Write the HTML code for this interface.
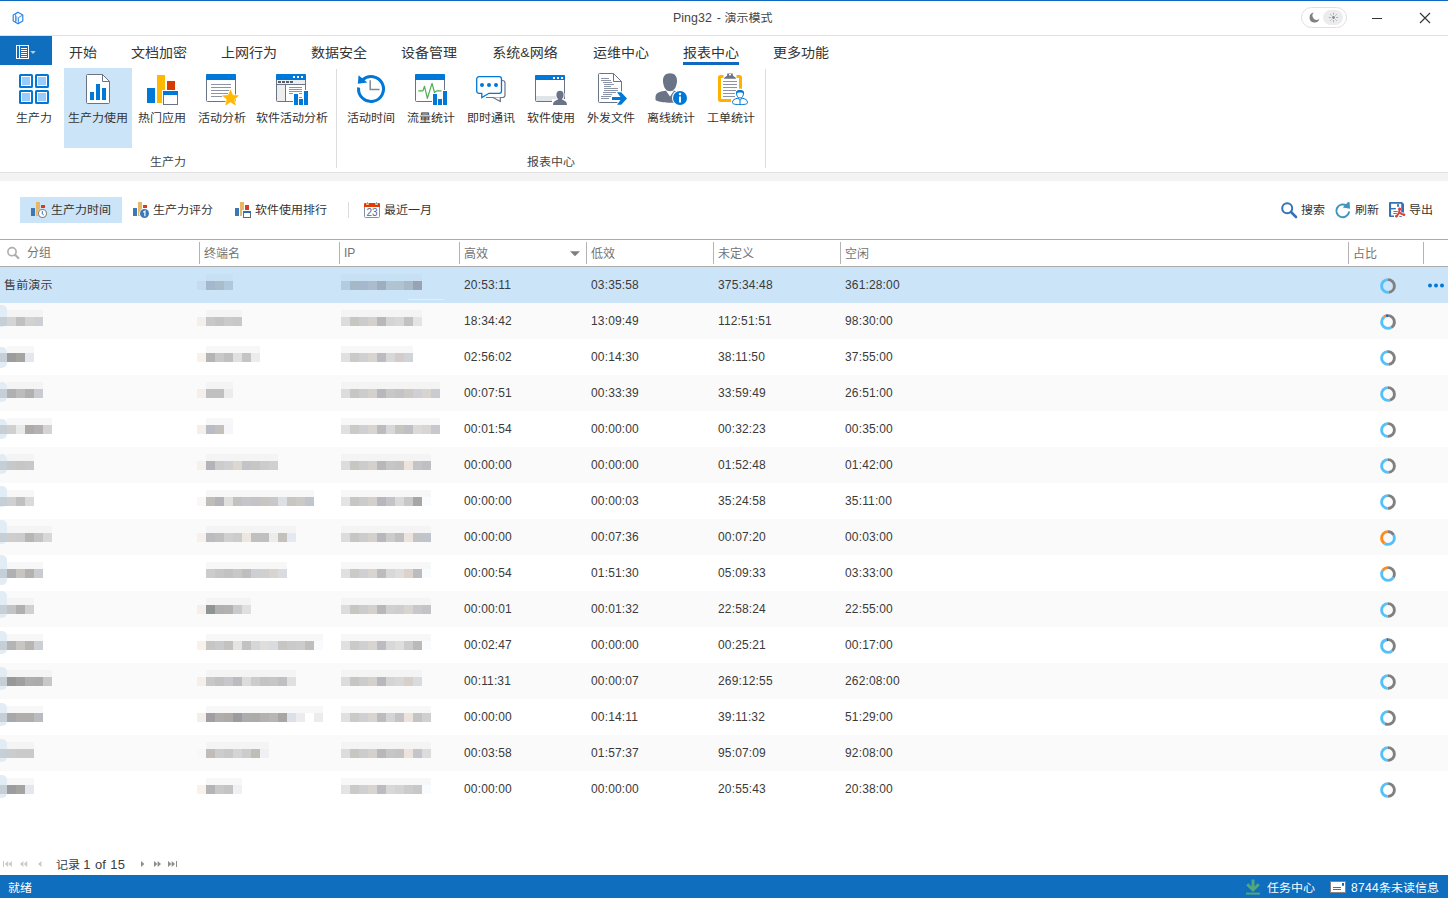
<!DOCTYPE html>
<html lang="zh-CN">
<head>
<meta charset="utf-8">
<title>Ping32 - 演示模式</title>
<style>
*{box-sizing:border-box;margin:0;padding:0}
html,body{width:1448px;height:898px;overflow:hidden;background:#fff}
body{position:relative;font-family:"Liberation Sans","Noto Sans CJK SC",sans-serif;font-size:12px;color:#333;line-height:1}
.a{position:absolute}
.t{position:absolute;white-space:nowrap;line-height:20px;height:20px;transform:scaleY(.92);transform-origin:0 14px}
.tab{font-size:14px;color:#333;top:42px;transform-origin:0 11px}
.rl{font-size:12px;color:#333;top:108px;text-align:center}
.gl{font-size:12px;color:#444;top:152px;text-align:center}
.hd{color:#747474;top:243px;transform:none}
.row{position:absolute;left:0;width:1448px;height:36px}
.row.e{background:#fafafa}
.row.s{background:#cce4f7}
.c{position:absolute;top:8px;line-height:20px;height:20px;white-space:nowrap;color:#3a3a3a;letter-spacing:.15px;transform:scaleY(.92);transform-origin:0 15px}
.n{transform:scaleY(1.04);transform-origin:0 14px}
.m{position:absolute;top:14px;height:9px;width:9px}
.sep{position:absolute;width:1px;background:#b4b4b4;top:242px;height:22px}
svg{position:absolute;overflow:visible}
</style>
</head>
<body>
<div class="a" style="left:0;top:0;width:1448px;height:1px;background:#1168c0"></div>
<div class="a" style="left:0;top:35px;width:1448px;height:1px;background:#e1e1e1"></div>
<div class="t" style="left:673px;top:8px;font-size:12px;color:#444"><span style="font-size:12.400px;word-spacing:1.300px;letter-spacing:.050px;display:inline-block;width:51.500px;white-space:pre;transform:scaleY(1.1);transform-origin:0 15px">Ping32 - </span>演示模式</div>
<svg style="left:12px;top:11px" width="12" height="14" viewBox="0 0 12 14"><path d="M6 1.200L10.800 4V10L6 12.800L1.200 10V4Z" fill="none" stroke="#2b85e8" stroke-width="1.200"/><path d="M10.800 4L6.400 6.600V12.600M6 1.200L3.600 3.600V11.200" fill="none" stroke="#2b85e8" stroke-width="0.900"/><path d="M4.800 5.200V10.500" stroke="#2b85e8" stroke-width="0.700"/></svg>
<div class="a" style="left:1301px;top:7px;width:46px;height:21px;border:1px solid #e0e0e0;border-radius:11px;background:#fff"></div>
<div class="a" style="left:1323px;top:10px;width:20px;height:15px;border-radius:8px;background:#ececec"></div>
<svg style="left:1309px;top:12px" width="11" height="11" viewBox="0 0 11 11"><path d="M5 0.600A5 5 0 1 0 10.400 6.800A4 4 0 0 1 5 0.600Z" fill="#808080"/></svg>
<svg style="left:1327px;top:11px" width="13" height="13" viewBox="0 0 13 13"><circle cx="6.500" cy="6.500" r="1.400" fill="#7a8aa0"/><g stroke="#a0a0a0" stroke-width="0.800"><path d="M6.500 1.800V3.800M6.500 9.200V11.200M1.800 6.500H3.800M9.200 6.500H11.200M3.200 3.200L4.600 4.600M8.400 8.400L9.800 9.800M9.800 3.200L8.400 4.600M3.200 9.800L4.600 8.400"/></g></svg>
<div class="a" style="left:1372px;top:18px;width:10px;height:1px;background:#333"></div>
<svg style="left:1420px;top:13px" width="10" height="10" viewBox="0 0 10 10"><path d="M0 0L10 10M10 0L0 10" stroke="#333" stroke-width="1.1"/></svg>
<div class="a" style="left:0;top:36px;width:52px;height:29px;background:#106ebe"></div>
<svg style="left:16px;top:45px" width="20" height="14" viewBox="0 0 20 14"><rect x="0.5" y="0.5" width="12" height="13" fill="none" stroke="#fff" stroke-width="1"/><path d="M3.5 0.5V13.5" stroke="#fff" stroke-width="1"/><path d="M5 3.5H11M5 5.5H11M5 7.5H11M5 9.5H11M5 11.5H11" stroke="#fff" stroke-width="1"/><path d="M14.3 6H19.7L17 9Z" fill="#b5d3ee"/></svg>
<div class="t tab" style="left:59px;width:48px;text-align:center">开始</div>
<div class="t tab" style="left:121px;width:76px;text-align:center">文档加密</div>
<div class="t tab" style="left:211px;width:76px;text-align:center">上网行为</div>
<div class="t tab" style="left:301px;width:76px;text-align:center">数据安全</div>
<div class="t tab" style="left:391px;width:76px;text-align:center">设备管理</div>
<div class="t tab" style="left:481px;width:88px;text-align:center">系统&amp;网络</div>
<div class="t tab" style="left:583px;width:76px;text-align:center">运维中心</div>
<div class="t tab" style="left:673px;width:76px;text-align:center">报表中心</div>
<div class="t tab" style="left:763px;width:76px;text-align:center">更多功能</div>
<div class="a" style="left:683px;top:62px;width:56px;height:3px;background:#1168c0"></div>
<div class="a" style="left:64px;top:68px;width:68px;height:80px;background:#cce4f7"></div>
<div class="a" style="left:336px;top:69px;width:1px;height:99px;background:#dcdcdc"></div>
<div class="a" style="left:765px;top:69px;width:1px;height:99px;background:#dcdcdc"></div>
<div class="a" style="left:0;top:172px;width:1448px;height:1px;background:#e1e1e1"></div>
<div class="a" style="left:0;top:173px;width:1448px;height:8px;background:#f3f3f3"></div>
<div class="t rl" style="left:-16px;width:100px">生产力</div>
<div class="t rl" style="left:48px;width:100px">生产力使用</div>
<div class="t rl" style="left:112px;width:100px">热门应用</div>
<div class="t rl" style="left:172px;width:100px">活动分析</div>
<div class="t rl" style="left:242px;width:100px">软件活动分析</div>
<div class="t rl" style="left:321px;width:100px">活动时间</div>
<div class="t rl" style="left:381px;width:100px">流量统计</div>
<div class="t rl" style="left:441px;width:100px">即时通讯</div>
<div class="t rl" style="left:501px;width:100px">软件使用</div>
<div class="t rl" style="left:561px;width:100px">外发文件</div>
<div class="t rl" style="left:621px;width:100px">离线统计</div>
<div class="t rl" style="left:681px;width:100px">工单统计</div>
<div class="t gl" style="left:118px;width:100px">生产力</div>
<div class="t gl" style="left:501px;width:100px">报表中心</div>
<svg style="left:19px;top:74px" width="30" height="30" viewBox="0 0 30 30"><rect x="1" y="1" width="12" height="12" rx="0.600" fill="#fff" stroke="#0078d7" stroke-width="2"/><rect x="3" y="3" width="8" height="8" fill="#99ccff"/><rect x="17" y="1" width="12" height="12" rx="0.600" fill="#fff" stroke="#0078d7" stroke-width="2"/><rect x="19" y="3" width="8" height="8" fill="#99ccff"/><rect x="1" y="17" width="12" height="12" rx="0.600" fill="#fff" stroke="#0078d7" stroke-width="2"/><rect x="3" y="19" width="8" height="8" fill="#99ccff"/><rect x="17" y="17" width="12" height="12" rx="0.600" fill="#fff" stroke="#0078d7" stroke-width="2"/><rect x="19" y="19" width="8" height="8" fill="#99ccff"/></svg>
<svg style="left:86px;top:74px" width="24" height="30" viewBox="0 0 24 30"><path d="M1.5 0.5H16.5L23.5 7.5V28.5a1 1 0 0 1-1 1H1.5a1 1 0 0 1-1-1V1.5a1 1 0 0 1 1-1Z" fill="#fff" stroke="#6b7487" stroke-width="1"/><path d="M16.5 0.5V7.5H23.5" fill="none" stroke="#6b7487" stroke-width="1"/><rect x="4" y="18" width="4" height="8" fill="#0078d7"/><rect x="10" y="10" width="4" height="16" fill="#0078d7"/><rect x="16" y="14" width="4" height="12" fill="#0078d7"/></svg>
<svg style="left:147px;top:75px" width="31" height="30" viewBox="0 0 31 30"><rect x="0" y="13" width="8" height="15" fill="#0078d7"/><rect x="10" y="0" width="8" height="28" fill="#ffb900"/><rect x="20" y="6" width="8" height="9" fill="#d83b01"/><rect x="15" y="15" width="17" height="16" fill="#fff"/><rect x="16.5" y="16.5" width="14" height="13" fill="#fff" stroke="#6b7487" stroke-width="1"/><rect x="16" y="16" width="15" height="4" fill="#0078d7"/></svg>
<svg style="left:206px;top:74px" width="33" height="32" viewBox="0 0 33 32"><rect x="0.500" y="0.500" width="29" height="27" rx="1" fill="#fff" stroke="#6b7487" stroke-width="1"/><path d="M0 1a1 1 0 0 1 1-1H29a1 1 0 0 1 1 1V6H0Z" fill="#0078d7"/><rect x="5" y="10" width="20" height="1" fill="#8a94a6"/><rect x="5" y="13" width="20" height="1" fill="#8a94a6"/><rect x="5" y="16" width="18" height="1" fill="#8a94a6"/><rect x="5" y="19" width="17" height="1" fill="#8a94a6"/><rect x="5" y="22" width="12" height="1" fill="#8a94a6"/><polygon points="24.50,16.00 26.67,21.31 32.39,21.74 28.02,25.44 29.38,31.01 24.50,28.00 19.62,31.01 20.98,25.44 16.61,21.74 22.33,21.31" fill="#fff" stroke="#fff" stroke-width="2" stroke-linejoin="round"/><polygon points="24.50,16.00 26.67,21.31 32.39,21.74 28.02,25.44 29.38,31.01 24.50,28.00 19.62,31.01 20.98,25.44 16.61,21.74 22.33,21.31" fill="#ffb900" stroke="#ffb900" stroke-width="0.600" stroke-linejoin="round"/></svg>
<svg style="left:276px;top:74px" width="33" height="31" viewBox="0 0 33 31"><rect x="0.5" y="0.5" width="29" height="27" rx="1" fill="#fff" stroke="#6b7487" stroke-width="1"/><path d="M0 1a1 1 0 0 1 1-1H29a1 1 0 0 1 1 1V6H0Z" fill="#0078d7"/><rect x="17" y="2" width="2" height="2" fill="#fff"/><rect x="21" y="2" width="2" height="2" fill="#fff"/><rect x="25" y="2" width="2" height="2" fill="#fff"/><rect x="1" y="6" width="28" height="4" fill="#eee"/><rect x="1" y="10" width="28" height="1" fill="#6b7487"/><rect x="2" y="7" width="3" height="2" fill="#555e70"/><rect x="6" y="7" width="3" height="2" fill="#555e70"/><rect x="10" y="7" width="3" height="2" fill="#555e70"/><rect x="14" y="7" width="3" height="2" fill="#555e70"/><rect x="1" y="11" width="8" height="16" fill="#eee"/><rect x="9" y="11" width="1" height="17" fill="#6b7487"/><rect x="13" y="13" width="13" height="1" fill="#8a94a6"/><rect x="13" y="15" width="13" height="1" fill="#8a94a6"/><rect x="13" y="17" width="13" height="1" fill="#8a94a6"/><rect x="13" y="19" width="13" height="1" fill="#8a94a6"/><rect x="23" y="23" width="3" height="1" fill="#8a94a6"/><rect x="17" y="19" width="6" height="12" fill="#fff"/><rect x="22" y="24" width="6" height="7" fill="#fff"/><rect x="27" y="16" width="6" height="15" fill="#fff"/><rect x="18" y="20" width="4" height="11" fill="#0078d7"/><rect x="23" y="25" width="4" height="6" fill="#0078d7"/><rect x="28" y="17" width="4" height="14" fill="#0078d7"/></svg>
<svg style="left:355px;top:73px" width="32" height="32" viewBox="0 0 32 32"><path d="M3.600 14.500A12.500 12.500 0 1 0 7.500 6.800" fill="none" stroke="#0078d7" stroke-width="3"/><path d="M3.600 2.300L2.800 10.800L12.300 9.600Z" fill="#0078d7"/><path d="M15.200 7.300V16.600H24.500" fill="none" stroke="#7f8796" stroke-width="1.500"/></svg>
<svg style="left:415px;top:74px" width="33" height="31" viewBox="0 0 33 31"><rect x="0.500" y="0.500" width="29" height="27" rx="1" fill="#fff" stroke="#6b7487" stroke-width="1"/><path d="M0 1a1 1 0 0 1 1-1H29a1 1 0 0 1 1 1V6H0Z" fill="#0078d7"/><path d="M3.300 16.900H7.900L9.500 12.300L12.400 24.300L17 9.400L19.500 18.500L21.500 16.900H26.500" fill="none" stroke="#4caf50" stroke-width="1.200" stroke-linejoin="round"/><rect x="17" y="19" width="6" height="12" fill="#fff"/><rect x="22" y="24" width="6" height="7" fill="#fff"/><rect x="27" y="16" width="6" height="15" fill="#fff"/><rect x="18" y="20" width="4" height="11" fill="#0078d7"/><rect x="23" y="25" width="4" height="6" fill="#0078d7"/><rect x="28" y="17" width="4" height="14" fill="#0078d7"/></svg>
<svg style="left:476px;top:76px" width="30" height="27" viewBox="0 0 30 27"><path d="M10 21.5H26.5a2.5 2.5 0 0 0 2.5-2.500V7a2.5 2.5 0 0 0-2.5-2.5H24" fill="none" stroke="#6b7487" stroke-width="1.2"/><path d="M17 21.5 L24.3 25.5 V21.5" fill="#fff" stroke="#6b7487" stroke-width="1.2"/><path d="M3 0.700H23.200a2.300 2.300 0 0 1 2.300 2.300V15a2.300 2.300 0 0 1-2.300 2.300H13L5.800 21.500V17.300H3a2.300 2.300 0 0 1-2.300-2.300V3a2.300 2.300 0 0 1 2.300-2.300Z" fill="#fff" stroke="#0078d7" stroke-width="1.3"/><circle cx="6" cy="9" r="2" fill="#0078d7"/><circle cx="13" cy="9" r="2" fill="#0078d7"/><circle cx="20" cy="9" r="2" fill="#0078d7"/></svg>
<svg style="left:535px;top:75px" width="33" height="31" viewBox="0 0 33 31"><rect x="0.5" y="0.5" width="29" height="26" rx="1" fill="#fff" stroke="#6b7487" stroke-width="1"/><path d="M0 1a1 1 0 0 1 1-1H29a1 1 0 0 1 1 1V5H0Z" fill="#0078d7"/><rect x="18" y="2" width="2" height="2" fill="#fff"/><rect x="22" y="2" width="2" height="2" fill="#fff"/><rect x="26" y="2" width="2" height="2" fill="#fff"/><rect x="1" y="21" width="28" height="5" fill="#e1e4e8"/><ellipse cx="25" cy="20" rx="4.600" ry="5" fill="#fff"/><path d="M17 31V24H33V31Z" fill="#fff"/><ellipse cx="25" cy="20" rx="3.600" ry="4.200" fill="#6b7487"/><path d="M18 30 C18 26 21 25.500 23 24.500 L27 24.500 C29 25.500 32 26 32 30 Z" fill="#6b7487"/><rect x="23" y="22" width="4" height="4" fill="#6b7487"/></svg>
<svg style="left:598px;top:73px" width="30" height="33" viewBox="0 0 30 33"><path d="M1.5 0.5H15.500L23.500 8.500V28.500a1 1 0 0 1-1 1H1.500a1 1 0 0 1-1-1V1.500a1 1 0 0 1 1-1Z" fill="#fff" stroke="#6b7487" stroke-width="1"/><path d="M15.500 0.500V8.500H23.500" fill="none" stroke="#6b7487" stroke-width="1"/><rect x="3" y="5" width="8" height="1" fill="#8a94a6"/><rect x="3" y="7" width="10" height="1" fill="#8a94a6"/><rect x="5" y="9" width="9" height="1" fill="#8a94a6"/><rect x="6" y="11" width="10" height="1" fill="#8a94a6"/><rect x="6" y="13" width="7" height="1" fill="#8a94a6"/><rect x="6" y="15" width="14" height="1" fill="#8a94a6"/><rect x="6" y="17" width="14" height="1" fill="#8a94a6"/><rect x="5" y="19" width="13" height="1" fill="#8a94a6"/><rect x="5" y="21" width="9" height="1" fill="#8a94a6"/><rect x="3" y="23" width="10" height="1" fill="#8a94a6"/><rect x="3" y="25" width="8" height="1" fill="#8a94a6"/><path d="M14 24H22.500L19 19.200H23.200L29 25.500L23.200 31.800H19L22.500 27H14Z" fill="#fff" stroke="#fff" stroke-width="2"/><path d="M14 24H22.500L19 19.200H23.200L29 25.500L23.200 31.800H19L22.500 27H14Z" fill="#0078d7"/></svg>
<svg style="left:655px;top:73px" width="33" height="33" viewBox="0 0 33 33"><path d="M15 0.200 C19.500 0.200 22 3 22 7.500 C22 11.500 20.500 15.500 18.500 17 L18.500 17.500 C24 18.500 28 19.500 28 24.500 V28 C22 30.500 6 30.500 0.500 27 V23.500 C1 19.500 5 18.500 11.500 17.500 L11.500 17 C9.500 15.500 8 11.500 8 7.500 C8 3 10.500 0.200 15 0.200Z" fill="#6b7487"/><path d="M10.500 17 L15 23.500 L19.500 17 C17 18.500 13 18.500 10.500 17Z" fill="#fff"/><circle cx="25" cy="25" r="8" fill="#fff"/><circle cx="25" cy="25" r="7" fill="#0078d7"/><rect x="24" y="23.500" width="2" height="6" fill="#fff"/><circle cx="25" cy="21" r="1.200" fill="#fff"/></svg>
<svg style="left:718px;top:73px" width="31" height="33" viewBox="0 0 31 33"><rect x="1.500" y="3.500" width="21" height="24" rx="1" fill="#fff" stroke="#ffb100" stroke-width="3"/><rect x="5.500" y="1" width="13" height="4.500" fill="#fff"/><path d="M6 5.800 L6.500 4.600 L9 2.800 L9.300 0.500 H14.700 L15 2.800 L17.500 4.600 L18 5.800Z" fill="#6b7487"/><rect x="11" y="1" width="2" height="1.400" fill="#fff"/><rect x="5" y="8" width="14" height="1" fill="#8a94a6"/><rect x="5" y="11" width="14" height="1" fill="#8a94a6"/><rect x="5" y="14" width="14" height="1" fill="#8a94a6"/><rect x="5" y="17" width="13" height="1" fill="#8a94a6"/><rect x="5" y="20" width="12" height="1" fill="#8a94a6"/><rect x="5" y="23" width="12" height="1" fill="#8a94a6"/><ellipse cx="22" cy="21" rx="5" ry="5.500" fill="#fff"/><path d="M13 33V26H31V33Z" fill="#fff"/><path d="M18.500 20 C18.500 18 20 17.500 22 17.500 C24 17.500 25.500 18 25.500 20 C25.500 23 24 25 22 25 C20 25 18.500 23 18.500 20Z" fill="#fff" stroke="#0078d7" stroke-width="1"/><path d="M18.300 20.500 C18 17.500 20 17 22 17 C24 17 26 17.500 25.700 20.500 C24.500 19 19.500 19 18.300 20.500Z" fill="#0078d7"/><path d="M20 25 C17 26 14.500 26.500 14.500 29.500 C14.500 31.500 18 31.500 22 31.500 C26 31.500 29.500 31.500 29.500 29.500 C29.500 26.500 27 26 24 25 L22 27.500 Z" fill="#fff" stroke="#0078d7" stroke-width="1"/><path d="M22 27.500V31.500" stroke="#0078d7" stroke-width="1"/></svg>
<div class="a" style="left:20px;top:197px;width:102px;height:26px;background:#cce4f7"></div>
<svg style="left:31px;top:202px" width="16" height="16" viewBox="0 0 16 16"><rect x="0" y="6" width="4" height="8" fill="#3a78b8"/><rect x="5" y="0" width="4" height="14" fill="#e9b763"/><rect x="10" y="3" width="4" height="3" fill="#d83b1e"/><circle cx="11.500" cy="11.500" r="5" fill="#cce4f7"/><circle cx="11.500" cy="11.500" r="4" fill="#fff" stroke="#808080" stroke-width="1.100"/><path d="M11.300 9V12L12.800 13" fill="none" stroke="#3a78b8" stroke-width="1"/></svg>
<svg style="left:133px;top:202px" width="16" height="16" viewBox="0 0 16 16"><rect x="0" y="6" width="4" height="8" fill="#3a78b8"/><rect x="5" y="0" width="4" height="14" fill="#e9b763"/><rect x="10" y="3" width="4" height="3" fill="#d83b1e"/><circle cx="11.500" cy="11.500" r="5.200" fill="#fff"/><circle cx="11.500" cy="11.500" r="4.500" fill="#3a78b8"/><path d="M10.300 10.200L11.900 9.200V14.200" fill="none" stroke="#fff" stroke-width="1.200"/></svg>
<svg style="left:235px;top:202px" width="16" height="16" viewBox="0 0 16 16"><rect x="0" y="6" width="4" height="8" fill="#3a78b8"/><rect x="5" y="0" width="4" height="14" fill="#e9b763"/><rect x="10" y="3" width="4" height="5" fill="#d83b1e"/><rect x="7" y="8" width="10" height="9" fill="#fff"/><rect x="8.500" y="9.500" width="7" height="6" fill="#fff" stroke="#666" stroke-width="1"/><rect x="8" y="9" width="8" height="2" fill="#2a6db8"/></svg>
<div class="t" style="left:51px;top:200px;color:#333">生产力时间</div>
<div class="t" style="left:153px;top:200px;color:#333">生产力评分</div>
<div class="t" style="left:255px;top:200px;color:#333">软件使用排行</div>
<div class="t" style="left:384px;top:200px;color:#333">最近一月</div>
<div class="t" style="left:1301px;top:200px;color:#333">搜索</div>
<div class="t" style="left:1355px;top:200px;color:#333">刷新</div>
<div class="t" style="left:1409px;top:200px;color:#333">导出</div>
<div class="a" style="left:348px;top:202px;width:1px;height:16px;background:#dcdcdc"></div>
<svg style="left:364px;top:202px" width="16" height="16" viewBox="0 0 16 16"><rect x="0.500" y="2.500" width="15" height="13" rx="1" fill="#fff" stroke="#8292ab" stroke-width="1"/><path d="M0 2a1 1 0 0 1 1-1H15a1 1 0 0 1 1 1V5H0Z" fill="#e03c00"/><rect x="2.500" y="0" width="2" height="3" fill="#fff"/><rect x="11.500" y="0" width="2" height="3" fill="#fff"/><rect x="3.200" y="0" width="0.800" height="2.500" fill="#8292ab"/><rect x="12.200" y="0" width="0.800" height="2.500" fill="#8292ab"/><text x="8" y="13.600" font-family="Liberation Sans, sans-serif" font-size="10" fill="#566582" text-anchor="middle">23</text></svg>
<svg style="left:1281px;top:202px" width="17" height="17" viewBox="0 0 17 17"><circle cx="6.200" cy="6.200" r="5" fill="none" stroke="#3572b6" stroke-width="2"/><path d="M10 10L15 15" stroke="#3572b6" stroke-width="2.600" stroke-linecap="round"/></svg>
<svg style="left:1335px;top:202px" width="16" height="17" viewBox="0 0 16 17"><path d="M14 10.300A6.400 6.400 0 1 1 11.300 3.500" fill="none" stroke="#3e95bf" stroke-width="2" stroke-linecap="round"/><path d="M7.800 5.400L15 6.700L14.600 0.200L13 0Z" fill="#3e95bf"/></svg>
<svg style="left:1389px;top:202px" width="17" height="17" viewBox="0 0 17 17"><path d="M1 0H13L15 2V10.500H12.200V1.700H2.100V13.400H5V15H1a1 1 0 0 1-1-1V1a1 1 0 0 1 1-1Z" fill="#3572b6"/><rect x="2" y="6" width="4.800" height="1.400" fill="#3572b6"/><rect x="8.100" y="2.200" width="1.900" height="2.600" fill="#3572b6"/><rect x="4.400" y="9" width="4.300" height="0.900" fill="#3572b6"/><rect x="4.400" y="11" width="3.400" height="0.900" fill="#3572b6"/><rect x="10.300" y="14" width="2.500" height="0.900" fill="#3572b6"/><path d="M10.600 6.800C10.700 9.500 10.300 11.800 7.300 14.300M10.700 10.800C12 12 13.500 12.600 15.300 12.700" fill="none" stroke="#e0403a" stroke-width="1.900" stroke-linecap="round"/><circle cx="10.600" cy="6.900" r="1.500" fill="#e0403a"/><circle cx="7.400" cy="14.200" r="1.300" fill="#e0403a"/><circle cx="15" cy="12.700" r="1.200" fill="#e0403a"/></svg>
<div class="a" style="left:0;top:239px;width:1448px;height:1px;background:#ababab"></div>
<div class="a" style="left:0;top:266px;width:1448px;height:1px;background:#ababab"></div>
<div class="sep" style="left:199px"></div>
<div class="sep" style="left:339px"></div>
<div class="sep" style="left:459px"></div>
<div class="sep" style="left:586px"></div>
<div class="sep" style="left:713px"></div>
<div class="sep" style="left:840px"></div>
<div class="sep" style="left:1348px"></div>
<div class="sep" style="left:1423px"></div>
<svg style="left:7px;top:247px" width="13" height="13" viewBox="0 0 13 13"><circle cx="5" cy="4.700" r="4.100" fill="none" stroke="#adadad" stroke-width="1.600"/><path d="M8 7.800L11.300 11" stroke="#adadad" stroke-width="2.200" stroke-linecap="round"/></svg>
<div class="t hd" style="left:27px;top:243px">分组</div>
<div class="t hd" style="left:204px;top:244px">终端名</div>
<div class="t hd" style="left:344px;top:243px">IP</div>
<div class="t hd" style="left:464px;top:244px">高效</div>
<div class="t hd" style="left:591px;top:244px">低效</div>
<div class="t hd" style="left:718px;top:244px">未定义</div>
<div class="t hd" style="left:845px;top:244px">空闲</div>
<div class="t hd" style="left:1353px;top:244px">占比</div>
<svg style="left:570px;top:251px" width="10" height="6" viewBox="0 0 10 6"><path d="M0 0.300H10L5 5.300Z" fill="#7f7f7f"/></svg>
<div class="row s" style="top:267px"><i class="a" style="left:408px;top:32px;width:36px;height:1px;background:#e3f0fb"></i><div class="c" style="left:4px">售前演示</div><i class="m" style="left:206px;top:7px;height:7px;width:27px;background:#c8e0f4"></i><i class="m" style="left:197px;background:#c6dcee"></i><i class="m" style="left:206px;background:#a4b8cc"></i><i class="m" style="left:215px;background:#a8bccc"></i><i class="m" style="left:224px;background:#b0c8dc"></i><i class="m" style="left:341px;top:7px;height:7px;width:81px;background:#c8e0f4"></i><i class="m" style="left:341px;background:#b4cce0"></i><i class="m" style="left:350px;background:#a4b8c8"></i><i class="m" style="left:359px;background:#a8b8cc"></i><i class="m" style="left:368px;background:#acbccc"></i><i class="m" style="left:377px;background:#9caec0"></i><i class="m" style="left:386px;background:#b0c4d4"></i><i class="m" style="left:395px;background:#b0c4d0"></i><i class="m" style="left:404px;background:#a8bac8"></i><i class="m" style="left:413px;background:#98a4b4"></i><div class="c n" style="left:464px">20:53:11</div><div class="c n" style="left:591px">03:35:58</div><div class="c n" style="left:718px">375:34:48</div><div class="c n" style="left:845px">361:28:00</div><svg style="left:1379.600px;top:10.500px" width="16" height="16" viewBox="0 0 16 16"><circle cx="8" cy="8" r="6.4" fill="none" stroke="#808080" stroke-width="2.900" stroke-dasharray="19.087 40.212" stroke-dashoffset="0.000" transform="rotate(-90 8 8)"/><circle cx="8" cy="8" r="6.4" fill="none" stroke="#55c1fa" stroke-width="2.900" stroke-dasharray="19.832 40.212" stroke-dashoffset="-19.087" transform="rotate(-90 8 8)"/><circle cx="8" cy="8" r="6.4" fill="none" stroke="#ff8c1a" stroke-width="2.900" stroke-dasharray="0.190 40.212" stroke-dashoffset="-38.919" transform="rotate(-90 8 8)"/><circle cx="8" cy="8" r="6.4" fill="none" stroke="#0a6ad0" stroke-width="2.900" stroke-dasharray="1.103 40.212" stroke-dashoffset="-39.109" transform="rotate(-90 8 8)"/></svg><svg style="left:1427px;top:16px" width="18" height="5" viewBox="0 0 18 5"><circle cx="3" cy="2.500" r="2" fill="#0078d7"/><circle cx="9" cy="2.500" r="2" fill="#0078d7"/><circle cx="15" cy="2.500" r="2" fill="#0078d7"/></svg></div>
<div class="row e" style="top:303px"><i class="a" style="left:0;top:2px;width:7px;height:22px;background:#e2ecf5;border-radius:0 5px 5px 0"></i><i class="m" style="left:0;width:7px;background:#c6ced6"></i><i class="m" style="left:7px;top:7px;height:7px;width:36px;background:#f4f4f4"></i><i class="m" style="left:7px;background:#d4d4d4"></i><i class="m" style="left:16px;background:#c0c0c0"></i><i class="m" style="left:25px;background:#d2d2d0"></i><i class="m" style="left:34px;background:#ccd0d4"></i><i class="m" style="left:206px;top:7px;height:7px;width:36px;background:#f4f4f4"></i><i class="m" style="left:197px;background:#f4efea"></i><i class="m" style="left:206px;background:#c8c8ca"></i><i class="m" style="left:215px;background:#c4c4c4"></i><i class="m" style="left:224px;background:#cacaca"></i><i class="m" style="left:233px;background:#c8c8c8"></i><i class="m" style="left:341px;top:7px;height:7px;width:81px;background:#f4f4f4"></i><i class="m" style="left:341px;background:#dcdcdc"></i><i class="m" style="left:350px;background:#c8c6c2"></i><i class="m" style="left:359px;background:#cccccc"></i><i class="m" style="left:368px;background:#d4d0cc"></i><i class="m" style="left:377px;background:#b8b8bc"></i><i class="m" style="left:386px;background:#d4d4d4"></i><i class="m" style="left:395px;background:#d8d8d8"></i><i class="m" style="left:404px;background:#c4c2c0"></i><i class="m" style="left:413px;background:#e4e4e4"></i><div class="c n" style="left:464px">18:34:42</div><div class="c n" style="left:591px">13:09:49</div><div class="c n" style="left:718px">112:51:51</div><div class="c n" style="left:845px">98:30:00</div><svg style="left:1379.600px;top:10.500px" width="16" height="16" viewBox="0 0 16 16"><circle cx="8" cy="8" r="6.4" fill="none" stroke="#808080" stroke-width="2.900" stroke-dasharray="16.293 40.212" stroke-dashoffset="0.000" transform="rotate(-90 8 8)"/><circle cx="8" cy="8" r="6.4" fill="none" stroke="#55c1fa" stroke-width="2.900" stroke-dasharray="18.669 40.212" stroke-dashoffset="-16.293" transform="rotate(-90 8 8)"/><circle cx="8" cy="8" r="6.4" fill="none" stroke="#ff8c1a" stroke-width="2.900" stroke-dasharray="2.177 40.212" stroke-dashoffset="-34.962" transform="rotate(-90 8 8)"/><circle cx="8" cy="8" r="6.4" fill="none" stroke="#0a6ad0" stroke-width="2.900" stroke-dasharray="3.073 40.212" stroke-dashoffset="-37.139" transform="rotate(-90 8 8)"/></svg></div>
<div class="row" style="top:339px"><i class="a" style="left:0;top:8px;width:7px;height:21px;background:#e2ecf5;border-radius:0 5px 5px 0"></i><i class="m" style="left:0;width:7px;background:#c6ced6"></i><i class="m" style="left:7px;top:7px;height:7px;width:27px;background:#f7f7f7"></i><i class="m" style="left:7px;background:#9c9c9e"></i><i class="m" style="left:16px;background:#a4a4a2"></i><i class="m" style="left:25px;background:#e4e8ee"></i><i class="m" style="left:206px;top:7px;height:7px;width:54px;background:#f7f7f7"></i><i class="m" style="left:197px;background:#f8f2ec"></i><i class="m" style="left:206px;background:#b4b4b6"></i><i class="m" style="left:215px;background:#c8c8c8"></i><i class="m" style="left:224px;background:#c0c0c0"></i><i class="m" style="left:233px;background:#e0e0e0"></i><i class="m" style="left:242px;background:#c4c4c4"></i><i class="m" style="left:251px;background:#ececec"></i><i class="m" style="left:341px;top:7px;height:7px;width:72px;background:#f7f7f7"></i><i class="m" style="left:341px;background:#e0e0e0"></i><i class="m" style="left:350px;background:#cccac6"></i><i class="m" style="left:359px;background:#d0d0d2"></i><i class="m" style="left:368px;background:#d8d4d0"></i><i class="m" style="left:377px;background:#bcbcc0"></i><i class="m" style="left:386px;background:#d8d8d8"></i><i class="m" style="left:395px;background:#d4ccc8"></i><i class="m" style="left:404px;background:#d0d4d8"></i><div class="c n" style="left:464px">02:56:02</div><div class="c n" style="left:591px">00:14:30</div><div class="c n" style="left:718px">38:11:50</div><div class="c n" style="left:845px">37:55:00</div><svg style="left:1379.600px;top:10.500px" width="16" height="16" viewBox="0 0 16 16"><circle cx="8" cy="8" r="6.4" fill="none" stroke="#808080" stroke-width="2.900" stroke-dasharray="19.230 40.212" stroke-dashoffset="0.000" transform="rotate(-90 8 8)"/><circle cx="8" cy="8" r="6.4" fill="none" stroke="#55c1fa" stroke-width="2.900" stroke-dasharray="19.372 40.212" stroke-dashoffset="-19.230" transform="rotate(-90 8 8)"/><circle cx="8" cy="8" r="6.4" fill="none" stroke="#ff8c1a" stroke-width="2.900" stroke-dasharray="0.123 40.212" stroke-dashoffset="-38.602" transform="rotate(-90 8 8)"/><circle cx="8" cy="8" r="6.4" fill="none" stroke="#0a6ad0" stroke-width="2.900" stroke-dasharray="1.488 40.212" stroke-dashoffset="-38.724" transform="rotate(-90 8 8)"/></svg></div>
<div class="row e" style="top:375px"><i class="a" style="left:0;top:7px;width:7px;height:20px;background:#e2ecf5;border-radius:0 5px 5px 0"></i><i class="m" style="left:0;width:7px;background:#c6ced6"></i><i class="m" style="left:7px;top:7px;height:7px;width:36px;background:#f4f4f4"></i><i class="m" style="left:7px;background:#b0b0b2"></i><i class="m" style="left:16px;background:#bcbcbc"></i><i class="m" style="left:25px;background:#b0b0b0"></i><i class="m" style="left:34px;background:#c8ccd0"></i><i class="m" style="left:206px;top:7px;height:7px;width:27px;background:#f4f4f4"></i><i class="m" style="left:197px;background:#f4efea"></i><i class="m" style="left:206px;background:#c0c0c2"></i><i class="m" style="left:215px;background:#c0c0c0"></i><i class="m" style="left:224px;background:#ececec"></i><i class="m" style="left:341px;top:7px;height:7px;width:99px;background:#f4f4f4"></i><i class="m" style="left:341px;background:#dcdcdc"></i><i class="m" style="left:350px;background:#c8c6c2"></i><i class="m" style="left:359px;background:#cccccc"></i><i class="m" style="left:368px;background:#d4d0cc"></i><i class="m" style="left:377px;background:#b8b8bc"></i><i class="m" style="left:386px;background:#c8c8c8"></i><i class="m" style="left:395px;background:#c4c4c6"></i><i class="m" style="left:404px;background:#cccac6"></i><i class="m" style="left:413px;background:#d0d0d4"></i><i class="m" style="left:422px;background:#d8d4d0"></i><i class="m" style="left:431px;background:#c8ccd0"></i><div class="c n" style="left:464px">00:07:51</div><div class="c n" style="left:591px">00:33:39</div><div class="c n" style="left:718px">33:59:49</div><div class="c n" style="left:845px">26:51:00</div><svg style="left:1379.600px;top:10.500px" width="16" height="16" viewBox="0 0 16 16"><circle cx="8" cy="8" r="6.4" fill="none" stroke="#808080" stroke-width="2.900" stroke-dasharray="17.545 40.212" stroke-dashoffset="0.000" transform="rotate(-90 8 8)"/><circle cx="8" cy="8" r="6.4" fill="none" stroke="#55c1fa" stroke-width="2.900" stroke-dasharray="22.215 40.212" stroke-dashoffset="-17.545" transform="rotate(-90 8 8)"/><circle cx="8" cy="8" r="6.4" fill="none" stroke="#ff8c1a" stroke-width="2.900" stroke-dasharray="0.366 40.212" stroke-dashoffset="-39.760" transform="rotate(-90 8 8)"/><circle cx="8" cy="8" r="6.4" fill="none" stroke="#0a6ad0" stroke-width="2.900" stroke-dasharray="0.085 40.212" stroke-dashoffset="-40.127" transform="rotate(-90 8 8)"/></svg></div>
<div class="row" style="top:411px"><i class="a" style="left:0;top:8px;width:7px;height:20px;background:#e2ecf5;border-radius:0 5px 5px 0"></i><i class="m" style="left:0;width:7px;background:#c6ced6"></i><i class="m" style="left:7px;top:7px;height:7px;width:45px;background:#f7f7f7"></i><i class="m" style="left:7px;background:#d0d0d0"></i><i class="m" style="left:16px;background:#e8eaea"></i><i class="m" style="left:25px;background:#aeaaa8"></i><i class="m" style="left:34px;background:#b4b2b0"></i><i class="m" style="left:43px;background:#d4d4d6"></i><i class="m" style="left:206px;top:7px;height:7px;width:27px;background:#f7f7f7"></i><i class="m" style="left:197px;background:#f4efea"></i><i class="m" style="left:206px;background:#b8bcc4"></i><i class="m" style="left:215px;background:#c4c0bc"></i><i class="m" style="left:224px;background:#f4f6fa"></i><i class="m" style="left:341px;top:7px;height:7px;width:99px;background:#f7f7f7"></i><i class="m" style="left:341px;background:#e0e0e0"></i><i class="m" style="left:350px;background:#cccac6"></i><i class="m" style="left:359px;background:#d0d0d2"></i><i class="m" style="left:368px;background:#d8d4d0"></i><i class="m" style="left:377px;background:#bcbcc0"></i><i class="m" style="left:386px;background:#d8d8d8"></i><i class="m" style="left:395px;background:#c8c4c0"></i><i class="m" style="left:404px;background:#c0c0c4"></i><i class="m" style="left:413px;background:#dcdad8"></i><i class="m" style="left:422px;background:#d8d6d2"></i><i class="m" style="left:431px;background:#c8c8cc"></i><div class="c n" style="left:464px">00:01:54</div><div class="c n" style="left:591px">00:00:00</div><div class="c n" style="left:718px">00:32:23</div><div class="c n" style="left:845px">00:35:00</div><svg style="left:1379.600px;top:10.500px" width="16" height="16" viewBox="0 0 16 16"><circle cx="8" cy="8" r="6.4" fill="none" stroke="#808080" stroke-width="2.900" stroke-dasharray="20.314 40.212" stroke-dashoffset="0.000" transform="rotate(-90 8 8)"/><circle cx="8" cy="8" r="6.4" fill="none" stroke="#55c1fa" stroke-width="2.900" stroke-dasharray="18.795 40.212" stroke-dashoffset="-20.314" transform="rotate(-90 8 8)"/><circle cx="8" cy="8" r="6.4" fill="none" stroke="#0a6ad0" stroke-width="2.900" stroke-dasharray="1.103 40.212" stroke-dashoffset="-39.110" transform="rotate(-90 8 8)"/></svg></div>
<div class="row e" style="top:447px"><i class="a" style="left:0;top:7px;width:7px;height:20px;background:#e2ecf5;border-radius:0 5px 5px 0"></i><i class="m" style="left:0;width:7px;background:#c6ced6"></i><i class="m" style="left:7px;top:7px;height:7px;width:27px;background:#f4f4f4"></i><i class="m" style="left:7px;background:#c8c8c8"></i><i class="m" style="left:16px;background:#c8c6c4"></i><i class="m" style="left:25px;background:#c8c8ca"></i><i class="m" style="left:206px;top:7px;height:7px;width:72px;background:#f4f4f4"></i><i class="m" style="left:197px;background:#f6f1ec"></i><i class="m" style="left:206px;background:#b4b4b8"></i><i class="m" style="left:215px;background:#cccccc"></i><i class="m" style="left:224px;background:#d0d0d2"></i><i class="m" style="left:233px;background:#dcd8d0"></i><i class="m" style="left:242px;background:#c4c4c6"></i><i class="m" style="left:251px;background:#c6c6c6"></i><i class="m" style="left:260px;background:#cccccc"></i><i class="m" style="left:269px;background:#d0d0d2"></i><i class="m" style="left:341px;top:7px;height:7px;width:90px;background:#f4f4f4"></i><i class="m" style="left:341px;background:#dcdcdc"></i><i class="m" style="left:350px;background:#c8c6c2"></i><i class="m" style="left:359px;background:#cccccc"></i><i class="m" style="left:368px;background:#d4d0cc"></i><i class="m" style="left:377px;background:#b8b8bc"></i><i class="m" style="left:386px;background:#c8c6c4"></i><i class="m" style="left:395px;background:#c4c4c4"></i><i class="m" style="left:404px;background:#ece4dc"></i><i class="m" style="left:413px;background:#c4c4c8"></i><i class="m" style="left:422px;background:#c0c0c4"></i><div class="c n" style="left:464px">00:00:00</div><div class="c n" style="left:591px">00:00:00</div><div class="c n" style="left:718px">01:52:48</div><div class="c n" style="left:845px">01:42:00</div><svg style="left:1379.600px;top:10.500px" width="16" height="16" viewBox="0 0 16 16"><circle cx="8" cy="8" r="6.4" fill="none" stroke="#808080" stroke-width="2.900" stroke-dasharray="19.095 40.212" stroke-dashoffset="0.000" transform="rotate(-90 8 8)"/><circle cx="8" cy="8" r="6.4" fill="none" stroke="#55c1fa" stroke-width="2.900" stroke-dasharray="21.117 40.212" stroke-dashoffset="-19.095" transform="rotate(-90 8 8)"/></svg></div>
<div class="row" style="top:483px"><i class="a" style="left:0;top:3px;width:7px;height:21px;background:#e2ecf5;border-radius:0 5px 5px 0"></i><i class="m" style="left:0;width:7px;background:#c6ced6"></i><i class="m" style="left:7px;top:7px;height:7px;width:27px;background:#f7f7f7"></i><i class="m" style="left:7px;background:#d0d0d0"></i><i class="m" style="left:16px;background:#c0c0c0"></i><i class="m" style="left:25px;background:#d8dadc"></i><i class="m" style="left:206px;top:7px;height:7px;width:108px;background:#f7f7f7"></i><i class="m" style="left:197px;background:#faf8f6"></i><i class="m" style="left:206px;background:#c0bcb8"></i><i class="m" style="left:215px;background:#b4b4b8"></i><i class="m" style="left:224px;background:#e0e0de"></i><i class="m" style="left:233px;background:#c4c2c0"></i><i class="m" style="left:242px;background:#c4c6ca"></i><i class="m" style="left:251px;background:#c4c4c6"></i><i class="m" style="left:260px;background:#c8c6c2"></i><i class="m" style="left:269px;background:#c8c8c8"></i><i class="m" style="left:278px;background:#dce0e4"></i><i class="m" style="left:287px;background:#c8c6c2"></i><i class="m" style="left:296px;background:#cccac6"></i><i class="m" style="left:305px;background:#c0c4cc"></i><i class="m" style="left:341px;top:7px;height:7px;width:90px;background:#f7f7f7"></i><i class="m" style="left:341px;background:#e4e4e4"></i><i class="m" style="left:350px;background:#c8c6c2"></i><i class="m" style="left:359px;background:#cccccc"></i><i class="m" style="left:368px;background:#d4d0cc"></i><i class="m" style="left:377px;background:#b8b8bc"></i><i class="m" style="left:386px;background:#c4c4c8"></i><i class="m" style="left:395px;background:#dcdad8"></i><i class="m" style="left:404px;background:#c8c8c8"></i><i class="m" style="left:413px;background:#a8a6a4"></i><i class="m" style="left:422px;background:#f8fcff"></i><div class="c n" style="left:464px">00:00:00</div><div class="c n" style="left:591px">00:00:03</div><div class="c n" style="left:718px">35:24:58</div><div class="c n" style="left:845px">35:11:00</div><svg style="left:1379.600px;top:10.500px" width="16" height="16" viewBox="0 0 16 16"><circle cx="8" cy="8" r="6.4" fill="none" stroke="#808080" stroke-width="2.900" stroke-dasharray="20.040 40.212" stroke-dashoffset="0.000" transform="rotate(-90 8 8)"/><circle cx="8" cy="8" r="6.4" fill="none" stroke="#55c1fa" stroke-width="2.900" stroke-dasharray="20.172 40.212" stroke-dashoffset="-20.040" transform="rotate(-90 8 8)"/><circle cx="8" cy="8" r="6.4" fill="none" stroke="#ff8c1a" stroke-width="2.900" stroke-dasharray="0.000 40.212" stroke-dashoffset="-40.212" transform="rotate(-90 8 8)"/></svg></div>
<div class="row e" style="top:519px"><i class="a" style="left:0;top:1px;width:7px;height:24px;background:#e2ecf5;border-radius:0 5px 5px 0"></i><i class="m" style="left:0;width:7px;background:#c6ced6"></i><i class="m" style="left:7px;top:7px;height:7px;width:45px;background:#f4f4f4"></i><i class="m" style="left:7px;background:#d0cecc"></i><i class="m" style="left:16px;background:#ccccce"></i><i class="m" style="left:25px;background:#b8b6b4"></i><i class="m" style="left:34px;background:#c4c4c6"></i><i class="m" style="left:43px;background:#d8d8d8"></i><i class="m" style="left:206px;top:7px;height:7px;width:90px;background:#f4f4f4"></i><i class="m" style="left:197px;background:#f6f1ec"></i><i class="m" style="left:206px;background:#bcbcc0"></i><i class="m" style="left:215px;background:#c0c0c0"></i><i class="m" style="left:224px;background:#d0d0d0"></i><i class="m" style="left:233px;background:#cccccc"></i><i class="m" style="left:242px;background:#ece8e0"></i><i class="m" style="left:251px;background:#c0c0c0"></i><i class="m" style="left:260px;background:#c0c0c0"></i><i class="m" style="left:269px;background:#ececec"></i><i class="m" style="left:278px;background:#c4c0bc"></i><i class="m" style="left:287px;background:#e4e8f0"></i><i class="m" style="left:341px;top:7px;height:7px;width:90px;background:#f4f4f4"></i><i class="m" style="left:341px;background:#dcdcdc"></i><i class="m" style="left:350px;background:#c8c6c2"></i><i class="m" style="left:359px;background:#cccccc"></i><i class="m" style="left:368px;background:#d4d0cc"></i><i class="m" style="left:377px;background:#b8b8bc"></i><i class="m" style="left:386px;background:#cccccc"></i><i class="m" style="left:395px;background:#c0c0c2"></i><i class="m" style="left:404px;background:#ece4dc"></i><i class="m" style="left:413px;background:#c4c4c6"></i><i class="m" style="left:422px;background:#c0c4cc"></i><div class="c n" style="left:464px">00:00:00</div><div class="c n" style="left:591px">00:07:36</div><div class="c n" style="left:718px">00:07:20</div><div class="c n" style="left:845px">00:03:00</div><svg style="left:1379.600px;top:10.500px" width="16" height="16" viewBox="0 0 16 16"><circle cx="8" cy="8" r="6.4" fill="none" stroke="#808080" stroke-width="2.900" stroke-dasharray="6.727 40.212" stroke-dashoffset="0.000" transform="rotate(-90 8 8)"/><circle cx="8" cy="8" r="6.4" fill="none" stroke="#55c1fa" stroke-width="2.900" stroke-dasharray="16.444 40.212" stroke-dashoffset="-6.727" transform="rotate(-90 8 8)"/><circle cx="8" cy="8" r="6.4" fill="none" stroke="#ff8c1a" stroke-width="2.900" stroke-dasharray="17.042 40.212" stroke-dashoffset="-23.171" transform="rotate(-90 8 8)"/></svg></div>
<div class="row" style="top:555px"><i class="a" style="left:0;top:0px;width:7px;height:30px;background:#e2ecf5;border-radius:0 5px 5px 0"></i><i class="m" style="left:0;width:7px;background:#c6ced6"></i><i class="m" style="left:7px;top:7px;height:7px;width:36px;background:#f7f7f7"></i><i class="m" style="left:7px;background:#b0b0b0"></i><i class="m" style="left:16px;background:#c8c4c0"></i><i class="m" style="left:25px;background:#b4b2b0"></i><i class="m" style="left:34px;background:#c8ccd0"></i><i class="m" style="left:206px;top:7px;height:7px;width:81px;background:#f7f7f7"></i><i class="m" style="left:206px;background:#cccccc"></i><i class="m" style="left:215px;background:#c8c6c4"></i><i class="m" style="left:224px;background:#c4c2c0"></i><i class="m" style="left:233px;background:#c8c8c8"></i><i class="m" style="left:242px;background:#c0bebe"></i><i class="m" style="left:251px;background:#ccd0d4"></i><i class="m" style="left:260px;background:#d0d0d0"></i><i class="m" style="left:269px;background:#d8d4d0"></i><i class="m" style="left:278px;background:#d8dce0"></i><i class="m" style="left:341px;top:7px;height:7px;width:90px;background:#f7f7f7"></i><i class="m" style="left:341px;background:#e0e0e0"></i><i class="m" style="left:350px;background:#cccac6"></i><i class="m" style="left:359px;background:#d0d0d2"></i><i class="m" style="left:368px;background:#d8d4d0"></i><i class="m" style="left:377px;background:#bcbcc0"></i><i class="m" style="left:386px;background:#d8d8d8"></i><i class="m" style="left:395px;background:#e0dedc"></i><i class="m" style="left:404px;background:#dcd4cc"></i><i class="m" style="left:413px;background:#bcbcc0"></i><i class="m" style="left:422px;background:#f8fcff"></i><div class="c n" style="left:464px">00:00:54</div><div class="c n" style="left:591px">01:51:30</div><div class="c n" style="left:718px">05:09:33</div><div class="c n" style="left:845px">03:33:00</div><svg style="left:1379.600px;top:10.500px" width="16" height="16" viewBox="0 0 16 16"><circle cx="8" cy="8" r="6.4" fill="none" stroke="#808080" stroke-width="2.900" stroke-dasharray="13.490 40.212" stroke-dashoffset="0.000" transform="rotate(-90 8 8)"/><circle cx="8" cy="8" r="6.4" fill="none" stroke="#55c1fa" stroke-width="2.900" stroke-dasharray="19.604 40.212" stroke-dashoffset="-13.490" transform="rotate(-90 8 8)"/><circle cx="8" cy="8" r="6.4" fill="none" stroke="#ff8c1a" stroke-width="2.900" stroke-dasharray="7.061 40.212" stroke-dashoffset="-33.094" transform="rotate(-90 8 8)"/><circle cx="8" cy="8" r="6.4" fill="none" stroke="#0a6ad0" stroke-width="2.900" stroke-dasharray="0.057 40.212" stroke-dashoffset="-40.155" transform="rotate(-90 8 8)"/></svg></div>
<div class="row e" style="top:591px"><i class="a" style="left:0;top:0px;width:7px;height:27px;background:#e2ecf5;border-radius:0 5px 5px 0"></i><i class="m" style="left:0;width:7px;background:#c6ced6"></i><i class="m" style="left:7px;top:7px;height:7px;width:27px;background:#f4f4f4"></i><i class="m" style="left:7px;background:#c4c4c4"></i><i class="m" style="left:16px;background:#b0b0b0"></i><i class="m" style="left:25px;background:#d0d0d0"></i><i class="m" style="left:206px;top:7px;height:7px;width:45px;background:#f4f4f4"></i><i class="m" style="left:197px;background:#f4efea"></i><i class="m" style="left:206px;background:#909494"></i><i class="m" style="left:215px;background:#b0b0b0"></i><i class="m" style="left:224px;background:#b4b2b0"></i><i class="m" style="left:233px;background:#c8cacc"></i><i class="m" style="left:242px;background:#e0e0de"></i><i class="m" style="left:341px;top:7px;height:7px;width:90px;background:#f4f4f4"></i><i class="m" style="left:341px;background:#dcdcdc"></i><i class="m" style="left:350px;background:#c8c6c2"></i><i class="m" style="left:359px;background:#cccccc"></i><i class="m" style="left:368px;background:#d4d0cc"></i><i class="m" style="left:377px;background:#b8b8bc"></i><i class="m" style="left:386px;background:#d0d0d0"></i><i class="m" style="left:395px;background:#ccced0"></i><i class="m" style="left:404px;background:#d8d4d0"></i><i class="m" style="left:413px;background:#c8c8cc"></i><i class="m" style="left:422px;background:#c4c4c6"></i><div class="c n" style="left:464px">00:00:01</div><div class="c n" style="left:591px">00:01:32</div><div class="c n" style="left:718px">22:58:24</div><div class="c n" style="left:845px">22:55:00</div><svg style="left:1379.600px;top:10.500px" width="16" height="16" viewBox="0 0 16 16"><circle cx="8" cy="8" r="6.4" fill="none" stroke="#808080" stroke-width="2.900" stroke-dasharray="20.070 40.212" stroke-dashoffset="0.000" transform="rotate(-90 8 8)"/><circle cx="8" cy="8" r="6.4" fill="none" stroke="#55c1fa" stroke-width="2.900" stroke-dasharray="20.120 40.212" stroke-dashoffset="-20.070" transform="rotate(-90 8 8)"/><circle cx="8" cy="8" r="6.4" fill="none" stroke="#ff8c1a" stroke-width="2.900" stroke-dasharray="0.022 40.212" stroke-dashoffset="-40.190" transform="rotate(-90 8 8)"/><circle cx="8" cy="8" r="6.4" fill="none" stroke="#0a6ad0" stroke-width="2.900" stroke-dasharray="0.000 40.212" stroke-dashoffset="-40.212" transform="rotate(-90 8 8)"/></svg></div>
<div class="row" style="top:627px"><i class="a" style="left:0;top:4px;width:7px;height:23px;background:#e2ecf5;border-radius:0 5px 5px 0"></i><i class="m" style="left:0;width:7px;background:#c6ced6"></i><i class="m" style="left:7px;top:7px;height:7px;width:36px;background:#f7f7f7"></i><i class="m" style="left:7px;background:#b4b4b4"></i><i class="m" style="left:16px;background:#c8c6c2"></i><i class="m" style="left:25px;background:#b8b6b4"></i><i class="m" style="left:34px;background:#ccd0d4"></i><i class="m" style="left:206px;top:7px;height:7px;width:117px;background:#f7f7f7"></i><i class="m" style="left:197px;background:#f8f2ea"></i><i class="m" style="left:206px;background:#c8c6c2"></i><i class="m" style="left:215px;background:#c8cacc"></i><i class="m" style="left:224px;background:#c4c2c0"></i><i class="m" style="left:233px;background:#e4e4e4"></i><i class="m" style="left:242px;background:#c4c2c0"></i><i class="m" style="left:251px;background:#d4d6d8"></i><i class="m" style="left:260px;background:#e0dedc"></i><i class="m" style="left:269px;background:#d8dcde"></i><i class="m" style="left:278px;background:#c8c6c2"></i><i class="m" style="left:287px;background:#cccac8"></i><i class="m" style="left:296px;background:#cccccc"></i><i class="m" style="left:305px;background:#c0bebc"></i><i class="m" style="left:314px;background:#f8fafe"></i><i class="m" style="left:341px;top:7px;height:7px;width:90px;background:#f7f7f7"></i><i class="m" style="left:341px;background:#e0e0e0"></i><i class="m" style="left:350px;background:#cccac6"></i><i class="m" style="left:359px;background:#d0d0d2"></i><i class="m" style="left:368px;background:#d8d4d0"></i><i class="m" style="left:377px;background:#bcbcc0"></i><i class="m" style="left:386px;background:#d8d8d8"></i><i class="m" style="left:395px;background:#e0dedc"></i><i class="m" style="left:404px;background:#cccccc"></i><i class="m" style="left:413px;background:#bcbab8"></i><i class="m" style="left:422px;background:#f8fcff"></i><div class="c n" style="left:464px">00:02:47</div><div class="c n" style="left:591px">00:00:00</div><div class="c n" style="left:718px">00:25:21</div><div class="c n" style="left:845px">00:17:00</div><svg style="left:1379.600px;top:10.500px" width="16" height="16" viewBox="0 0 16 16"><circle cx="8" cy="8" r="6.4" fill="none" stroke="#808080" stroke-width="2.900" stroke-dasharray="15.146 40.212" stroke-dashoffset="0.000" transform="rotate(-90 8 8)"/><circle cx="8" cy="8" r="6.4" fill="none" stroke="#55c1fa" stroke-width="2.900" stroke-dasharray="22.586 40.212" stroke-dashoffset="-15.146" transform="rotate(-90 8 8)"/><circle cx="8" cy="8" r="6.4" fill="none" stroke="#0a6ad0" stroke-width="2.900" stroke-dasharray="2.480 40.212" stroke-dashoffset="-37.733" transform="rotate(-90 8 8)"/></svg></div>
<div class="row e" style="top:663px"><i class="a" style="left:0;top:4px;width:7px;height:23px;background:#e2ecf5;border-radius:0 5px 5px 0"></i><i class="m" style="left:0;width:7px;background:#c6ced6"></i><i class="m" style="left:7px;top:7px;height:7px;width:45px;background:#f4f4f4"></i><i class="m" style="left:7px;background:#989898"></i><i class="m" style="left:16px;background:#a0a0a0"></i><i class="m" style="left:25px;background:#aeaeae"></i><i class="m" style="left:34px;background:#acacac"></i><i class="m" style="left:43px;background:#c8c8c8"></i><i class="m" style="left:206px;top:7px;height:7px;width:90px;background:#f4f4f4"></i><i class="m" style="left:197px;background:#f4efea"></i><i class="m" style="left:206px;background:#c8c8c8"></i><i class="m" style="left:215px;background:#c4c2c0"></i><i class="m" style="left:224px;background:#c8c8ca"></i><i class="m" style="left:233px;background:#bcbcc0"></i><i class="m" style="left:242px;background:#dcdcdc"></i><i class="m" style="left:251px;background:#cccccc"></i><i class="m" style="left:260px;background:#c4c4c4"></i><i class="m" style="left:269px;background:#c8c6c4"></i><i class="m" style="left:278px;background:#c0c0c4"></i><i class="m" style="left:287px;background:#e0e0e0"></i><i class="m" style="left:341px;top:7px;height:7px;width:81px;background:#f4f4f4"></i><i class="m" style="left:341px;background:#dcdcdc"></i><i class="m" style="left:350px;background:#c8c6c2"></i><i class="m" style="left:359px;background:#cccccc"></i><i class="m" style="left:368px;background:#d4d0cc"></i><i class="m" style="left:377px;background:#b8b8bc"></i><i class="m" style="left:386px;background:#d4d4d4"></i><i class="m" style="left:395px;background:#d8d8d8"></i><i class="m" style="left:404px;background:#d8d0c8"></i><i class="m" style="left:413px;background:#d8dce0"></i><div class="c n" style="left:464px">00:11:31</div><div class="c n" style="left:591px">00:00:07</div><div class="c n" style="left:718px">269:12:55</div><div class="c n" style="left:845px">262:08:00</div><svg style="left:1379.600px;top:10.500px" width="16" height="16" viewBox="0 0 16 16"><circle cx="8" cy="8" r="6.4" fill="none" stroke="#808080" stroke-width="2.900" stroke-dasharray="19.831 40.212" stroke-dashoffset="0.000" transform="rotate(-90 8 8)"/><circle cx="8" cy="8" r="6.4" fill="none" stroke="#55c1fa" stroke-width="2.900" stroke-dasharray="20.367 40.212" stroke-dashoffset="-19.831" transform="rotate(-90 8 8)"/><circle cx="8" cy="8" r="6.4" fill="none" stroke="#ff8c1a" stroke-width="2.900" stroke-dasharray="0.000 40.212" stroke-dashoffset="-40.198" transform="rotate(-90 8 8)"/><circle cx="8" cy="8" r="6.4" fill="none" stroke="#0a6ad0" stroke-width="2.900" stroke-dasharray="0.015 40.212" stroke-dashoffset="-40.198" transform="rotate(-90 8 8)"/></svg></div>
<div class="row" style="top:699px"><i class="a" style="left:0;top:4px;width:7px;height:23px;background:#e2ecf5;border-radius:0 5px 5px 0"></i><i class="m" style="left:0;width:7px;background:#c6ced6"></i><i class="m" style="left:7px;top:7px;height:7px;width:36px;background:#f7f7f7"></i><i class="m" style="left:7px;background:#a8a8aa"></i><i class="m" style="left:16px;background:#b0aeac"></i><i class="m" style="left:25px;background:#b0aeac"></i><i class="m" style="left:34px;background:#b8bcc0"></i><i class="m" style="left:206px;top:7px;height:7px;width:117px;background:#f7f7f7"></i><i class="m" style="left:197px;background:#f4efea"></i><i class="m" style="left:206px;background:#a09ea0"></i><i class="m" style="left:215px;background:#b0aeac"></i><i class="m" style="left:224px;background:#aeaaa6"></i><i class="m" style="left:233px;background:#9c9ca0"></i><i class="m" style="left:242px;background:#acacae"></i><i class="m" style="left:251px;background:#aeaaa6"></i><i class="m" style="left:260px;background:#b4b2b0"></i><i class="m" style="left:269px;background:#b8b6b4"></i><i class="m" style="left:278px;background:#a8a6a4"></i><i class="m" style="left:287px;background:#dce0e8"></i><i class="m" style="left:296px;background:#ececec"></i><i class="m" style="left:314px;background:#ececec"></i><i class="m" style="left:341px;top:7px;height:7px;width:90px;background:#f7f7f7"></i><i class="m" style="left:341px;background:#e0e0e0"></i><i class="m" style="left:350px;background:#cccac6"></i><i class="m" style="left:359px;background:#d0d0d2"></i><i class="m" style="left:368px;background:#d8d4d0"></i><i class="m" style="left:377px;background:#bcbcc0"></i><i class="m" style="left:386px;background:#d4d4d4"></i><i class="m" style="left:395px;background:#c4c4c8"></i><i class="m" style="left:404px;background:#ece4dc"></i><i class="m" style="left:413px;background:#c4c4c4"></i><i class="m" style="left:422px;background:#d0d0d0"></i><div class="c n" style="left:464px">00:00:00</div><div class="c n" style="left:591px">00:14:11</div><div class="c n" style="left:718px">39:11:32</div><div class="c n" style="left:845px">51:29:00</div><svg style="left:1379.600px;top:10.500px" width="16" height="16" viewBox="0 0 16 16"><circle cx="8" cy="8" r="6.4" fill="none" stroke="#808080" stroke-width="2.900" stroke-dasharray="22.772 40.212" stroke-dashoffset="0.000" transform="rotate(-90 8 8)"/><circle cx="8" cy="8" r="6.4" fill="none" stroke="#55c1fa" stroke-width="2.900" stroke-dasharray="17.336 40.212" stroke-dashoffset="-22.772" transform="rotate(-90 8 8)"/><circle cx="8" cy="8" r="6.4" fill="none" stroke="#ff8c1a" stroke-width="2.900" stroke-dasharray="0.105 40.212" stroke-dashoffset="-40.108" transform="rotate(-90 8 8)"/></svg></div>
<div class="row e" style="top:735px"><i class="a" style="left:0;top:4px;width:7px;height:23px;background:#e2ecf5;border-radius:0 5px 5px 0"></i><i class="m" style="left:0;width:7px;background:#c6ced6"></i><i class="m" style="left:7px;top:7px;height:7px;width:27px;background:#f4f4f4"></i><i class="m" style="left:7px;background:#cccccc"></i><i class="m" style="left:16px;background:#cccac8"></i><i class="m" style="left:25px;background:#cacaca"></i><i class="m" style="left:206px;top:7px;height:7px;width:63px;background:#f4f4f4"></i><i class="m" style="left:197px;background:#f8f8f8"></i><i class="m" style="left:206px;background:#c0bcb8"></i><i class="m" style="left:215px;background:#cccccc"></i><i class="m" style="left:224px;background:#c8c8c8"></i><i class="m" style="left:233px;background:#d4d4d4"></i><i class="m" style="left:242px;background:#cccccc"></i><i class="m" style="left:251px;background:#c0bcb8"></i><i class="m" style="left:260px;background:#f0f0f4"></i><i class="m" style="left:341px;top:7px;height:7px;width:90px;background:#f4f4f4"></i><i class="m" style="left:341px;background:#dcdcdc"></i><i class="m" style="left:350px;background:#c8c6c2"></i><i class="m" style="left:359px;background:#cccccc"></i><i class="m" style="left:368px;background:#d4d0cc"></i><i class="m" style="left:377px;background:#b8b8bc"></i><i class="m" style="left:386px;background:#c8c6c4"></i><i class="m" style="left:395px;background:#c4c4c4"></i><i class="m" style="left:404px;background:#ece4dc"></i><i class="m" style="left:413px;background:#c4c4cc"></i><i class="m" style="left:422px;background:#dcdcdc"></i><div class="c n" style="left:464px">00:03:58</div><div class="c n" style="left:591px">01:57:37</div><div class="c n" style="left:718px">95:07:09</div><div class="c n" style="left:845px">92:08:00</div><svg style="left:1379.600px;top:10.500px" width="16" height="16" viewBox="0 0 16 16"><circle cx="8" cy="8" r="6.4" fill="none" stroke="#808080" stroke-width="2.900" stroke-dasharray="19.574 40.212" stroke-dashoffset="0.000" transform="rotate(-90 8 8)"/><circle cx="8" cy="8" r="6.4" fill="none" stroke="#55c1fa" stroke-width="2.900" stroke-dasharray="20.208 40.212" stroke-dashoffset="-19.574" transform="rotate(-90 8 8)"/><circle cx="8" cy="8" r="6.4" fill="none" stroke="#ff8c1a" stroke-width="2.900" stroke-dasharray="0.416 40.212" stroke-dashoffset="-39.782" transform="rotate(-90 8 8)"/><circle cx="8" cy="8" r="6.4" fill="none" stroke="#0a6ad0" stroke-width="2.900" stroke-dasharray="0.014 40.212" stroke-dashoffset="-40.198" transform="rotate(-90 8 8)"/></svg></div>
<div class="row" style="top:771px"><i class="a" style="left:0;top:4px;width:7px;height:23px;background:#e2ecf5;border-radius:0 5px 5px 0"></i><i class="m" style="left:0;width:7px;background:#c6ced6"></i><i class="m" style="left:7px;top:7px;height:7px;width:27px;background:#f7f7f7"></i><i class="m" style="left:7px;background:#9c9c9e"></i><i class="m" style="left:16px;background:#a4a4a2"></i><i class="m" style="left:25px;background:#e4e8ee"></i><i class="m" style="left:206px;top:7px;height:7px;width:36px;background:#f7f7f7"></i><i class="m" style="left:197px;background:#f8f2ea"></i><i class="m" style="left:206px;background:#b4b4b8"></i><i class="m" style="left:215px;background:#c8c8c8"></i><i class="m" style="left:224px;background:#c4c4c4"></i><i class="m" style="left:233px;background:#f0f0f4"></i><i class="m" style="left:341px;top:7px;height:7px;width:90px;background:#f7f7f7"></i><i class="m" style="left:341px;background:#e4e4e4"></i><i class="m" style="left:350px;background:#cccac6"></i><i class="m" style="left:359px;background:#d0d0d2"></i><i class="m" style="left:368px;background:#d8d4d0"></i><i class="m" style="left:377px;background:#bcbcc0"></i><i class="m" style="left:386px;background:#d8d8d8"></i><i class="m" style="left:395px;background:#d4d4d4"></i><i class="m" style="left:404px;background:#cccccc"></i><i class="m" style="left:413px;background:#c8c8c8"></i><i class="m" style="left:422px;background:#f8fcff"></i><div class="c n" style="left:464px">00:00:00</div><div class="c n" style="left:591px">00:00:00</div><div class="c n" style="left:718px">20:55:43</div><div class="c n" style="left:845px">20:38:00</div><svg style="left:1379.600px;top:10.500px" width="16" height="16" viewBox="0 0 16 16"><circle cx="8" cy="8" r="6.4" fill="none" stroke="#808080" stroke-width="2.900" stroke-dasharray="19.963 40.212" stroke-dashoffset="0.000" transform="rotate(-90 8 8)"/><circle cx="8" cy="8" r="6.4" fill="none" stroke="#55c1fa" stroke-width="2.900" stroke-dasharray="20.249 40.212" stroke-dashoffset="-19.963" transform="rotate(-90 8 8)"/></svg></div>
<svg style="left:3px;top:861px" width="9" height="6" viewBox="0 0 9 6"><rect x="0" y="0" width="1" height="6" fill="#c9c9c9"/><path d="M5.2 0V6L1.8 3Z" fill="#c9c9c9"/><path d="M8.8 0V6L5.4 3Z" fill="#c9c9c9"/></svg>
<svg style="left:20px;top:861px" width="8" height="6" viewBox="0 0 8 6"><path d="M3.4 0V6L0.0 3Z" fill="#c9c9c9"/><path d="M7.2 0V6L3.8 3Z" fill="#c9c9c9"/></svg>
<svg style="left:38px;top:861px" width="4" height="6" viewBox="0 0 4 6"><path d="M3.4 0V6L0.0 3Z" fill="#c9c9c9"/></svg>
<div class="t" style="left:56px;top:855px;color:#3c3c3c;font-size:12px">记录 <span style="font-size:13px;word-spacing:.600px;letter-spacing:.100px">1 of 15</span></div>
<svg style="left:141px;top:861px" width="4" height="6" viewBox="0 0 4 6"><path d="M0.0 0V6L3.4 3Z" fill="#8c8c8c"/></svg>
<svg style="left:154px;top:861px" width="8" height="6" viewBox="0 0 8 6"><path d="M0.0 0V6L3.4 3Z" fill="#8c8c8c"/><path d="M3.6 0V6L7.0 3Z" fill="#8c8c8c"/></svg>
<svg style="left:168px;top:861px" width="10" height="6" viewBox="0 0 10 6"><path d="M0.0 0V6L3.4 3Z" fill="#8c8c8c"/><path d="M3.6 0V6L7.0 3Z" fill="#8c8c8c"/><rect x="8" y="0" width="1" height="6" fill="#8c8c8c"/></svg>
<div class="a" style="left:0;top:875px;width:1448px;height:23px;background:#106ebe"></div>
<div class="t" style="left:8px;top:878px;color:#fff">就绪</div>
<svg style="left:1246px;top:879px" width="14" height="16" viewBox="0 0 14 16"><path d="M7 0.500V9.500M1.200 5.200L7 11L12.800 5.200" fill="none" stroke="#52a67c" stroke-width="3"/><rect x="0" y="13.600" width="14" height="2" fill="#52a67c"/></svg>
<div class="t" style="left:1267px;top:878px;color:#fff">任务中心</div>
<svg style="left:1330px;top:881px" width="16" height="12" viewBox="0 0 16 12"><rect x="0.500" y="0.500" width="15" height="11" fill="#fff" stroke="#858585" stroke-width="1"/><rect x="12" y="2" width="2" height="2.800" fill="#106ebe"/><path d="M3 6.500H11M3 8.500H11" stroke="#5a6a8a" stroke-width="1"/></svg>
<div class="t" style="left:1351px;top:878px;color:#fff"><span style="letter-spacing:.300px;display:inline-block;transform:scaleY(1.12);transform-origin:0 15px">8744</span>条未读信息</div>
</body>
</html>
